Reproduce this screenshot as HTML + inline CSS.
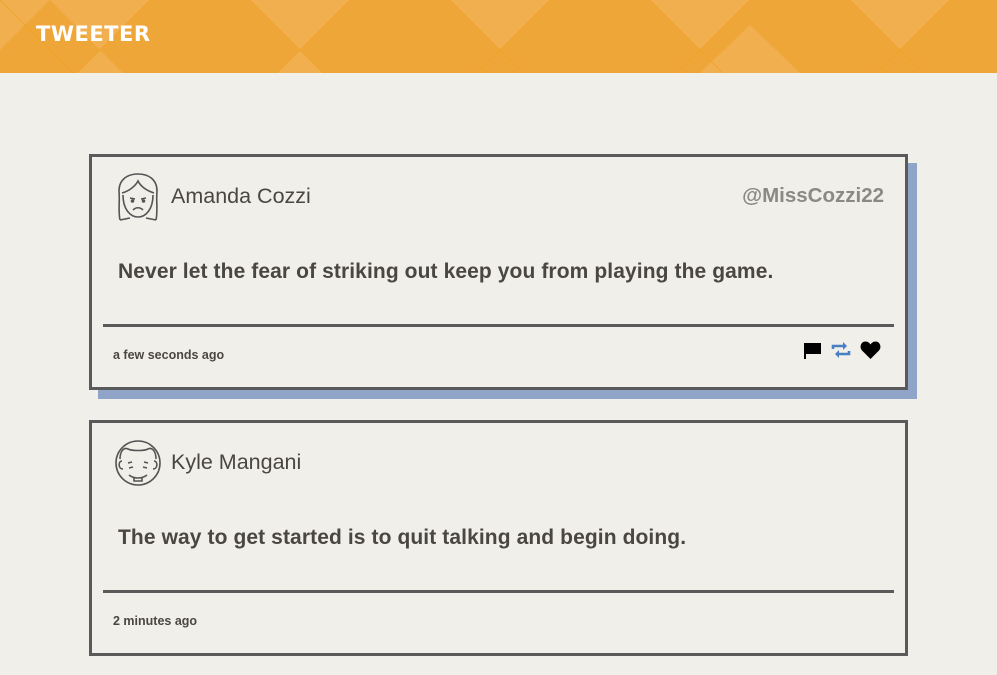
<!DOCTYPE html>
<html><head><meta charset="utf-8"><style>
*{margin:0;padding:0;box-sizing:border-box}
body{width:997px;height:675px;overflow:hidden;background:#f1efe9;font-family:"Liberation Sans",sans-serif;color:#4a4741;position:relative}
header{position:absolute;left:0;top:0;width:997px;height:73px;background:#efa638;overflow:hidden}
header .logo{position:absolute;left:36px;top:22px;color:#fff;font-weight:900;font-size:21px;letter-spacing:0.5px;font-family:"DejaVu Sans",sans-serif}
.card{position:absolute;left:89px;width:819px;height:236px;border:3px solid #5a5a5a;background:#f1efe9}
.shadow{box-shadow:9px 9px 0 #8fa4c7}
.av{position:absolute;left:22px;top:14px}
.name{position:absolute;left:79px;top:27px;font-size:21.5px;font-weight:300;color:#4a4741}
.handle{position:absolute;right:21px;top:27px;font-size:20.5px;font-weight:bold;color:#8b8984}
.msg{position:absolute;left:26px;top:103px;font-size:21px;font-weight:bold;color:#4a4741;letter-spacing:0.1px}
.div{position:absolute;left:11px;right:11px;top:167px;height:3px;background:#5a5a5a}
.time{position:absolute;left:21px;top:191px;font-size:12.5px;font-weight:bold;color:#4a4741}
.icons{position:absolute;right:24px;top:184px;display:flex;gap:8px;align-items:center}
</style></head><body>
<header>
<svg width="997" height="73" style="position:absolute;left:0;top:0">
<g fill="#f3b560" opacity="0.6">
<polygon points="0,0 50,0 0,50"/>
<polygon points="50,0 150,0 100,50"/><polygon points="100,50 50,100 150,100"/>
<polygon points="250,0 350,0 300,50"/><polygon points="300,50 250,100 350,100"/>
<polygon points="450,0 550,0 500,50"/>
<polygon points="650,0 750,0 700,50"/><polygon points="750,25 700,73 800,73"/>
<polygon points="850,0 950,0 900,50"/>
</g>
<g stroke="#f0a020" stroke-width="1" opacity="0.6">
<line x1="0" y1="0" x2="100" y2="100"/><line x1="150" y1="0" x2="50" y2="100"/>
<line x1="250" y1="0" x2="350" y2="100"/><line x1="350" y1="0" x2="250" y2="100"/>
<line x1="450" y1="0" x2="550" y2="100"/><line x1="550" y1="0" x2="450" y2="100"/>
<line x1="650" y1="0" x2="750" y2="100"/><line x1="750" y1="0" x2="650" y2="100"/>
<line x1="850" y1="0" x2="950" y2="100"/><line x1="950" y1="0" x2="850" y2="100"/>
</g>
</svg>
<div class="logo">TWEETER</div>
</header>

<div class="card shadow" style="top:154px">
<svg class="av" width="48" height="52" viewBox="0 0 48 52" fill="none" stroke="#555" stroke-width="1.6">
<path d="M6 49 C4 40 6 30 5 20 C5 8 14 3 24 3 C34 3 43 8 43 20 C42 30 44 40 42 49"/>
<path d="M8 22 C16 20 22 14 24 10 C27 16 34 20 40 22"/>
<path d="M9 24 C9 38 16 46 24 46 C32 46 39 38 39 24"/>
<path d="M16 27 L21 28 M27 28 L32 27"/><circle cx="18.5" cy="30" r="1" fill="#555"/><circle cx="29.5" cy="30" r="1" fill="#555"/>
<path d="M19 39 C22 36 26 36 29 39"/>
<path d="M6 49 L16 47 M42 49 L32 47"/>
</svg>
<div class="name">Amanda Cozzi</div>
<div class="handle">@MissCozzi22</div>
<div class="msg">Never let the fear of striking out keep you from playing the game.</div>
<div class="div"></div>
<div class="time">a few seconds ago</div>
<div class="icons">
<svg width="18" height="17" viewBox="0 0 18 17"><rect x="0" y="1" width="2" height="16" fill="#000"/><path d="M2 1 L17 1 L17 12 L2 12 Z" fill="#000"/></svg>
<svg width="22" height="16" viewBox="0 0 22 16" fill="none" stroke="#4a7fc4" stroke-width="2.6"><path d="M3 7 V4 H15"/><path d="M19 9 V12 H7"/><path d="M13 0 L17 4 L13 8" fill="#4a7fc4" stroke="none"/><path d="M9 8 L5 12 L9 16" fill="#4a7fc4" stroke="none"/></svg>
<svg width="21" height="18" viewBox="0 0 21 18"><path d="M10.5 18 L2 9.5 C-1 6 1 0.5 5.5 0.5 C8 0.5 9.5 2 10.5 3.5 C11.5 2 13 0.5 15.5 0.5 C20 0.5 22 6 19 9.5 Z" fill="#000"/></svg>
</div>
</div>

<div class="card" style="top:420px">
<svg class="av" width="48" height="52" viewBox="0 0 48 52" fill="none" stroke="#555" stroke-width="1.6">
<circle cx="24" cy="26" r="22"/>
<path d="M6 22 C6 14 10 10 14 12 C18 14 30 14 34 12 C38 10 42 14 42 22"/>
<path d="M8 24 C4 24 4 32 9 32 M40 24 C44 24 44 32 39 32"/>
<path d="M14 26 L18 25 M30 25 L34 26 M15 31 L19 30 M29 30 L33 31"/>
<path d="M15 38 C20 42 28 42 33 38"/><path d="M20 41 L20 44 L28 44 L28 41"/>
</svg>
<div class="name">Kyle Mangani</div>
<div class="msg">The way to get started is to quit talking and begin doing.</div>
<div class="div"></div>
<div class="time">2 minutes ago</div>
</div>
</body></html>
